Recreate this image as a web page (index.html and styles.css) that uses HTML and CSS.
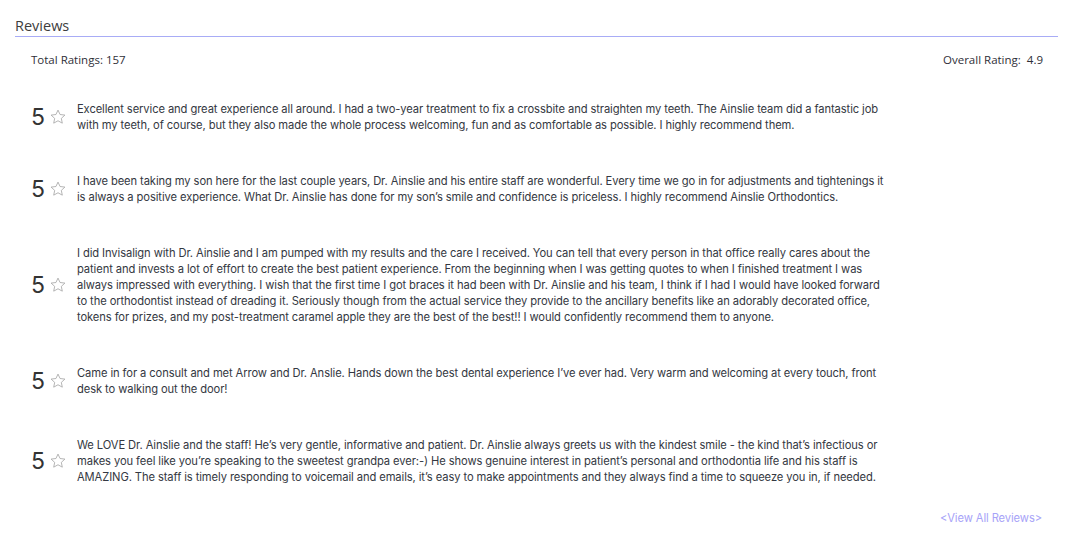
FILE: index.html
```html
<!DOCTYPE html>
<html lang="en">
<head>
<meta charset="utf-8">
<title>Reviews</title>
<link rel="stylesheet" href="styles.css">
</head>
<body>
<section class="reviews">
  <h2 class="title">Reviews</h2>
  <div class="summary">
    <span>Total Ratings: 157</span>
    <span>Overall Rating:&nbsp; 4.9</span>
  </div>
  <ul class="list">
    <li class="review">
      <div class="score"><span class="num">5</span><svg class="star" viewBox="0 0 24 24"><path d="M12 2.8l2.75 5.9 6.45.75-4.78 4.4 1.3 6.37L12 17.02l-5.72 3.2 1.3-6.37L2.8 9.45l6.45-.75z"/></svg></div>
      <p class="text">Excellent service and great experience all around. I had a two-year treatment to fix a crossbite and straighten my teeth. The Ainslie team did a fantastic job with my teeth, of course, but they also made the whole process welcoming, fun and as comfortable as possible. I highly recommend them.</p>
    </li>
    <li class="review">
      <div class="score"><span class="num">5</span><svg class="star" viewBox="0 0 24 24"><path d="M12 2.8l2.75 5.9 6.45.75-4.78 4.4 1.3 6.37L12 17.02l-5.72 3.2 1.3-6.37L2.8 9.45l6.45-.75z"/></svg></div>
      <p class="text">I have been taking my son here for the last couple years, Dr. Ainslie and his entire staff are wonderful. Every time we go in for adjustments and tightenings it is always a positive experience. What Dr. Ainslie has done for my son’s smile and confidence is priceless. I highly recommend Ainslie Orthodontics.</p>
    </li>
    <li class="review">
      <div class="score"><span class="num">5</span><svg class="star" viewBox="0 0 24 24"><path d="M12 2.8l2.75 5.9 6.45.75-4.78 4.4 1.3 6.37L12 17.02l-5.72 3.2 1.3-6.37L2.8 9.45l6.45-.75z"/></svg></div>
      <p class="text">I did Invisalign with Dr. Ainslie and I am pumped with my results and the care I received. You can tell that every person in that office really cares about the patient and invests a lot of effort to create the best patient experience. From the beginning when I was getting quotes to when I finished treatment I was always impressed with everything. I wish that the first time I got braces it had been with Dr. Ainslie and his team, I think if I had I would have looked forward to the orthodontist instead of dreading it. Seriously though from the actual service they provide to the ancillary benefits like an adorably decorated office, tokens for prizes, and my post-treatment caramel apple they are the best of the best!! I would confidently recommend them to anyone.</p>
    </li>
    <li class="review">
      <div class="score"><span class="num">5</span><svg class="star" viewBox="0 0 24 24"><path d="M12 2.8l2.75 5.9 6.45.75-4.78 4.4 1.3 6.37L12 17.02l-5.72 3.2 1.3-6.37L2.8 9.45l6.45-.75z"/></svg></div>
      <p class="text">Came in for a consult and met Arrow and Dr. Anslie. Hands down the best dental experience I’ve ever had. Very warm and welcoming at every touch, front desk to walking out the door!</p>
    </li>
    <li class="review">
      <div class="score"><span class="num">5</span><svg class="star" viewBox="0 0 24 24"><path d="M12 2.8l2.75 5.9 6.45.75-4.78 4.4 1.3 6.37L12 17.02l-5.72 3.2 1.3-6.37L2.8 9.45l6.45-.75z"/></svg></div>
      <p class="text">We LOVE Dr. Ainslie and the staff! He’s very gentle, informative and patient. Dr. Ainslie always greets us with the kindest smile - the kind that’s infectious or makes you feel like you’re speaking to the sweetest grandpa ever:-) He shows genuine interest in patient’s personal and orthodontia life and his staff is AMAZING. The staff is timely responding to voicemail and emails, it’s easy to make appointments and they always find a time to squeeze you in, if needed.</p>
    </li>
  </ul>
  <div class="more"><a href="#" class="more-link">&lt;View All Reviews&gt;</a></div>
</section>
</body>
</html>
```

FILE: styles.css
```css
* { box-sizing: border-box; }
html, body { margin: 0; padding: 0; background: #fff; }
body { font-family: "Open Sans", "Liberation Sans", sans-serif; color: #333; }

.reviews { padding: 17px 13px 0 15px; }

.title {
  margin: 0;
  font-family: "Open Sans", sans-serif;
  font-weight: 400;
  font-size: 14.5px;
  line-height: 18px;
  color: #3d3d3d;
  padding-bottom: 1px;
  border-bottom: 1px solid #a8acf6;
}

.summary {
  display: flex;
  justify-content: space-between;
  padding: 15px 15px 0 16px;
  font-size: 11.5px;
  line-height: 16px;
  color: #2f2f38;
}

.list { list-style: none; margin: 0; padding: 33px 0 0 16px; }

.review {
  display: flex;
  align-items: center;
  padding-bottom: 40px;
}

.score {
  display: flex;
  align-items: center;
  width: 46px;
  flex: none;
}
.num {
  font-family: "Inter", sans-serif;
  font-size: 23px;
  line-height: 24px;
  color: #333;
  margin-top: 0;
}
.star {
  width: 18px;
  height: 18px;
  margin-left: 4px;
  fill: none;
  stroke: #a5a5a5;
  stroke-width: 1.1;
  stroke-linejoin: round;
}

.text {
  margin: 0;
  width: 808px;
  font-family: "Inter", sans-serif;
  font-size: 11.2px;
  letter-spacing: -0.1px;
  line-height: 16px;
  color: #343842;
}

.more {
  display: flex;
  justify-content: flex-end;
  padding-right: 16px;
  margin-top: -15px;
}
.more-link {
  font-family: "Inter", sans-serif;
  font-size: 11.2px;
  letter-spacing: -0.1px;
  line-height: 16px;
  color: #a7a3f8;
  text-decoration: none;
}
```
